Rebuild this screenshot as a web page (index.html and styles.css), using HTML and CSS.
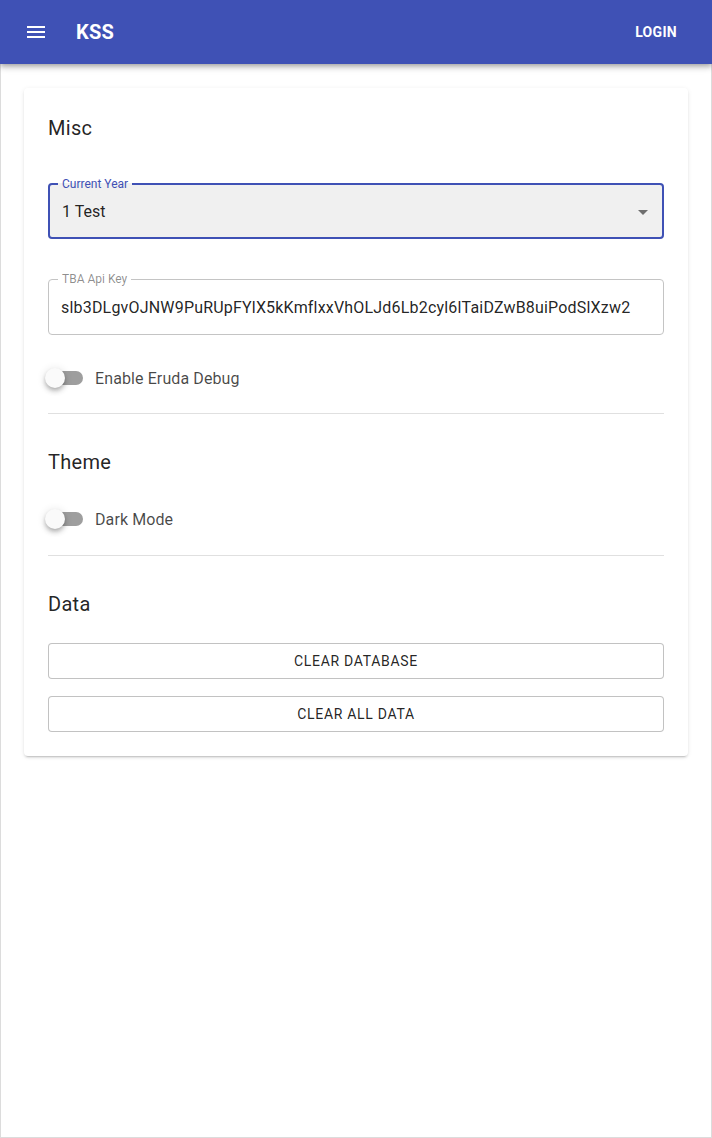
FILE: index.html
```html
<!DOCTYPE html>
<html lang="en">
<head>
<meta charset="utf-8">
<title>KSS</title>
<link rel="stylesheet" href="styles.css">
</head>
<body>
<header class="app-bar">
  <span class="nav-icon">
    <svg viewBox="0 0 24 24" width="24" height="24"><path fill="#fff" d="M3,6H21V8H3V6M3,11H21V13H3V11M3,16H21V18H3V16Z"/></svg>
  </span>
  <span class="app-title">KSS</span>
  <span class="login">LOGIN</span>
</header>
<main class="main">
  <section class="card">
    <h2 class="card-title">Misc</h2>
    <fieldset class="field field-focused">
      <legend class="field-label">Current Year</legend>
      <div class="field-row">
        <span class="field-value">1 Test</span>
        <svg class="caret" viewBox="0 0 24 24" width="24" height="24"><path fill="rgba(0,0,0,0.54)" d="M7,10L12,15L17,10H7Z"/></svg>
      </div>
    </fieldset>
    <fieldset class="field field-plain">
      <legend class="field-label">TBA Api Key</legend>
      <div class="field-row">
        <span class="field-value key-value">slb3DLgvOJNW9PuRUpFYlX5kKmflxxVhOLJd6Lb2cyl6lTaiDZwB8uiPodSlXzw2</span>
      </div>
    </fieldset>
    <div class="switch-row switch-first">
      <span class="switch"><span class="switch-thumb"></span></span>
      <span class="switch-label">Enable Eruda Debug</span>
    </div>
    <hr class="divider">
    <h2 class="card-title title-after-divider">Theme</h2>
    <div class="switch-row switch-theme">
      <span class="switch"><span class="switch-thumb"></span></span>
      <span class="switch-label">Dark Mode</span>
    </div>
    <hr class="divider divider-theme">
    <h2 class="card-title title-after-divider">Data</h2>
    <button class="btn btn-first">CLEAR DATABASE</button>
    <button class="btn btn-second">CLEAR ALL DATA</button>
  </section>
</main>
</body>
</html>
```
FILE: styles.css
```css
* { box-sizing: border-box; }
html, body { margin: 0; padding: 0; }
body {
  font-family: Roboto, "Liberation Sans", sans-serif;
  color: rgba(0,0,0,0.87);
  background: #fff;
  width: 712px;
  height: 1138px;
  display: flex;
  flex-direction: column;
}
.app-bar {
  position: relative;
  z-index: 2;
  height: 64px;
  flex: 0 0 64px;
  background: #3f51b5;
  color: #fff;
  display: flex;
  align-items: center;
  box-shadow: 0 2px 4px -1px rgba(0,0,0,.2), 0 4px 5px 0 rgba(0,0,0,.14), 0 1px 10px 0 rgba(0,0,0,.12);
}
.nav-icon {
  width: 24px;
  height: 24px;
  margin-left: 24px;
  display: flex;
}
.app-title {
  margin-left: 28px;
  font-size: 20px;
  font-weight: 700;
  letter-spacing: 0.2px;
}
.login {
  margin-left: auto;
  margin-right: 35px;
  font-size: 14px;
  font-weight: 700;
  letter-spacing: 0.3px;
}
.main {
  flex: 1;
  border: 1px solid #dcdcdc;
  border-top: none;
  padding: 24px 23px;
}
.card {
  background: #fff;
  border-radius: 4px;
  padding: 24px 24px 24px;
  box-shadow: 0 3px 1px -2px rgba(0,0,0,.12), 0 2px 2px 0 rgba(0,0,0,.08), 0 1px 5px 0 rgba(0,0,0,.08);
}
.card-title {
  margin: 0;
  font-size: 20px;
  font-weight: 400;
  line-height: 32px;
  letter-spacing: 0.3px;
  color: rgba(0,0,0,0.87);
}
.title-after-divider { margin-top: 32px; }
.field {
  margin: 0;
  min-width: 0;
  border-radius: 4px;
  padding: 0 12px;
}
.field-label {
  font-size: 12px;
  line-height: 12px;
  padding: 0 4px;
}
.field-focused {
  margin-top: 34px;
  border: 2px solid #3f51b5;
  background: #f0f0f0;
  padding-top: 10px;
  padding-bottom: 13px;
}
.field-focused .field-label {
  color: #3f51b5;
  margin-left: -4px;
}
.field-plain {
  margin-top: 34px;
  border: 1px solid #c4c4c4;
  padding-top: 11px;
  padding-bottom: 14px;
}
.field-plain .field-label {
  color: rgba(0,0,0,0.45);
  margin-left: -3px;
}
.field-row {
  display: flex;
  align-items: center;
  height: 24px;
}
.field-value {
  font-size: 16px;
  line-height: 24px;
  flex: 1;
  white-space: nowrap;
}
.key-value { letter-spacing: 0.19px; }
.caret { margin-right: -5px; }
.switch-row {
  display: flex;
  align-items: center;
  height: 24px;
}
.switch-first { margin-top: 31px; }
.switch-theme { margin-top: 29px; }
.switch {
  position: relative;
  width: 35px;
  height: 14px;
  border-radius: 7px;
  background: #9e9e9e;
}
.switch-thumb {
  position: absolute;
  left: -3px;
  top: -3px;
  width: 20px;
  height: 20px;
  border-radius: 50%;
  background: #fafafa;
  box-shadow: 0 2px 4px -1px rgba(0,0,0,.2), 0 4px 5px 0 rgba(0,0,0,.14), 0 1px 10px 0 rgba(0,0,0,.12);
}
.switch-label {
  margin-left: 12px;
  font-size: 16px;
  letter-spacing: 0.1px;
  color: rgba(0,0,0,0.72);
}
.divider {
  margin: 23px 0 0;
  border: none;
  border-top: 1px solid rgba(0,0,0,0.12);
  height: 0;
}
.divider-theme { margin-top: 24px; }
.btn {
  display: block;
  width: 100%;
  height: 36px;
  background: #fff;
  border: 1px solid rgba(0,0,0,0.24);
  border-radius: 4px;
  font-family: Roboto, "Liberation Sans", sans-serif;
  font-size: 14px;
  font-weight: 400;
  letter-spacing: 0.7px;
  color: rgba(0,0,0,0.87);
  padding: 0;
}
.btn-first { margin-top: 23px; }
.btn-second { margin-top: 17px; }
```
